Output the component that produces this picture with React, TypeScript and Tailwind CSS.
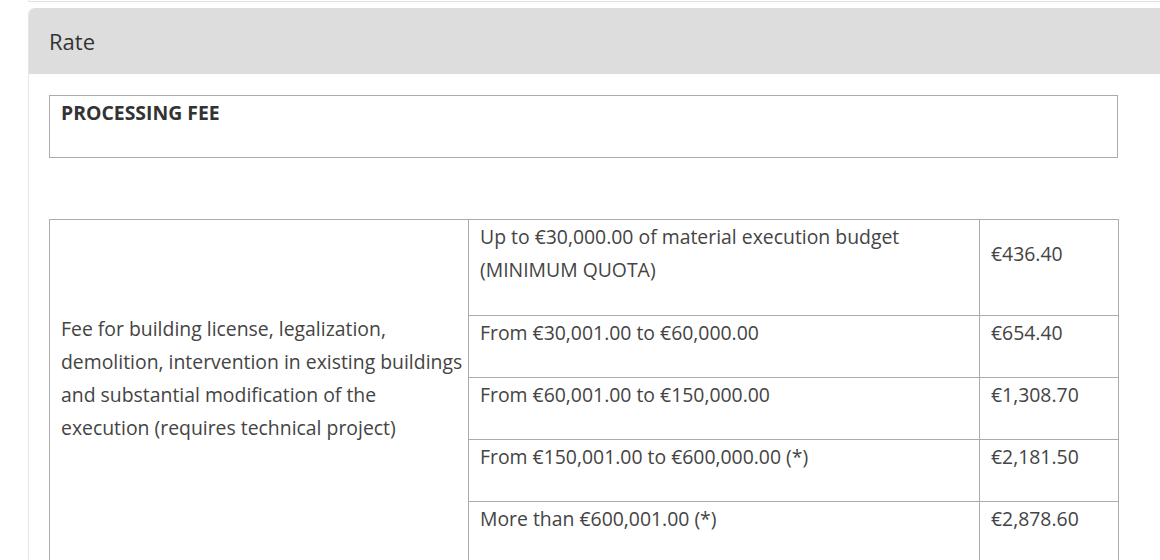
const ROWS = [
  { range: ['Up to €30,000.00 of material execution budget', '(MINIMUM QUOTA)'], fee: '€436.40' },
  { range: ['From €30,001.00 to €60,000.00'], fee: '€654.40' },
  { range: ['From €60,001.00 to €150,000.00'], fee: '€1,308.70' },
  { range: ['From €150,001.00 to €600,000.00 (*)'], fee: '€2,181.50' },
  { range: ['More than €600,001.00 (*)'], fee: '€2,878.60' },
]

function Cell({ lines, rowSpan, tall }: { lines: string[]; rowSpan?: number; tall?: boolean }) {
  return (
    <td rowSpan={rowSpan} className="border border-[#ababab] px-[11px] align-middle">
      <p className={tall ? 'mb-[29px]' : 'mb-[28px]'}>
        {lines.map((l, i) => (
          <span key={i} className="block whitespace-nowrap">{l}</span>
        ))}
      </p>
    </td>
  )
}

export default function App() {
  return (
    <div className="w-[1160px] h-[560px] overflow-hidden bg-white font-['Open_Sans',sans-serif] text-[#444]">
      <div className="ml-[28px] h-[2px] border-b border-l border-[#e2e2e2] rounded-bl-md" />
      <div className="ml-[28px] mt-[6px] border-l border-[#e6e6e6] rounded-tl-md">
        <div className="h-[66px] bg-[#dddddd] rounded-tl-md flex items-center pl-[20px] text-[22px] text-[#333]">
          Rate
        </div>
        <div className="pl-[20px] pt-[21px] w-[1090px]">
          <table className="w-[1069px] border-collapse text-[19.4px] leading-[33px]">
            <tbody>
              <tr>
                <td className="border border-[#ababab] px-[11px] align-middle font-bold text-[#333]">
                  <p className="mb-[28px]">PROCESSING FEE</p>
                </td>
              </tr>
            </tbody>
          </table>

          <table className="mt-[61px] w-[1069px] border-collapse table-fixed text-[19.4px] leading-[33px]">
            <colgroup>
              <col className="w-[419px]" />
              <col className="w-[511px]" />
              <col className="w-[139px]" />
            </colgroup>
            <tbody>
              {ROWS.map((r, i) => (
                <tr key={i}>
                  {i === 0 && (
                    <Cell
                      rowSpan={5}
                      lines={[
                        'Fee for building license, legalization,',
                        'demolition, intervention in existing buildings',
                        'and substantial modification of the',
                        'execution (requires technical project)',
                      ]}
                    />
                  )}
                  <Cell lines={r.range} tall={i === 0} />
                  <Cell lines={[r.fee]} />
                </tr>
              ))}
            </tbody>
          </table>
        </div>
      </div>
    </div>
  )
}
